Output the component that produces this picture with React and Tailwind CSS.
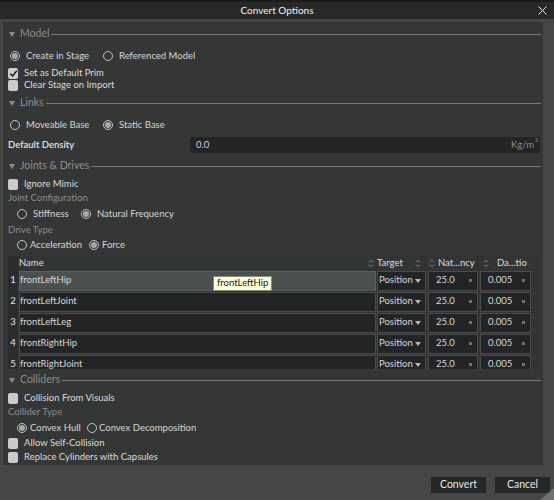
import React from "react";

const font = { fontFamily: "Lato, 'Liberation Sans', sans-serif" };

function Radio({ on, label, className, gap }) {
  return (
    <div className={`flex items-center shrink-0 ${className}`}>
      <span className="w-[10px] h-[10px] rounded-full border border-[#c4c4c4] flex items-center justify-center shrink-0">
        {on && <span className="w-[6px] h-[6px] rounded-full bg-[#a9a9a9]" />}
      </span>
      <span className={`text-[9.5px] text-[#d6d6d6] whitespace-nowrap ${gap}`}>{label}</span>
    </div>
  );
}

function Check({ on, label, h }) {
  return (
    <div className={`flex items-center pl-[5px] ${h}`}>
      <span className="w-[10px] h-[11px] rounded-[2px] bg-[#cbcbcb] flex items-center justify-center shrink-0">
        {on && (
          <svg width="9" height="9" viewBox="0 0 10 10">
            <path d="M1.5 5.2 L4 7.8 L8.8 1.8" fill="none" stroke="#111" strokeWidth="1.6" />
          </svg>
        )}
      </span>
      <span className="ml-[6px] text-[9.5px] text-[#dcdcdc] whitespace-nowrap">{label}</span>
    </div>
  );
}

function Header({ label, h }) {
  return (
    <div className={`flex items-center pl-[6px] pr-[2px] ${h}`}>
      <svg width="6" height="5" viewBox="0 0 6 5" className="shrink-0">
        <path d="M0 0 H6 L3 5 Z" fill="#8a8a8a" />
      </svg>
      <span className="ml-[5px] text-[10.5px] text-[#8c8c8c] whitespace-nowrap">{label}</span>
      <div className="ml-[2px] flex-1 h-[1px] bg-[#7a7a7a]" />
    </div>
  );
}

function Label({ text, h }) {
  return (
    <div className={`flex items-center pl-[5px] text-[9.5px] text-[#8b8b8b] ${h}`}>{text}</div>
  );
}

function SortIcon() {
  return (
    <svg width="6" height="9" viewBox="0 0 6 9" className="shrink-0">
      <path d="M0.8 3.4 L3 1.2 L5.2 3.4 M0.8 5.6 L3 7.8 L5.2 5.6" fill="none" stroke="#8d8d8d" strokeWidth="0.9" />
    </svg>
  );
}

const rows = ["frontLeftHip", "frontLeftJoint", "frontLeftLeg", "frontRightHip", "frontRightJoint"];

function Table() {
  return (
    <div className="ml-[5px] w-[532px] h-[113px] overflow-hidden bg-[#333434] relative">
      <div className="flex h-[14px] items-center text-[9.5px] text-[#dedede]">
        <div className="w-[10px] h-full bg-[#2b2c2c]" />
        <div className="ml-[1px] w-[357px] flex items-center justify-between pr-[2px]">
          <span>Name</span>
          <SortIcon />
        </div>
        <div className="ml-[1px] w-[49px] flex items-center justify-between pr-[4px] h-full border-r border-[#2a2b2b]">
          <span>Target</span>
          <SortIcon />
        </div>
        <div className="ml-[2px] w-[50px] flex items-center gap-[3px] pl-[1px] h-full border-r border-[#2a2b2b]">
          <SortIcon />
          <span className="whitespace-nowrap">Nat...ncy</span>
        </div>
        <div className="ml-[2px] w-[51px] flex items-center pl-[3px] h-full">
          <SortIcon />
          <span className="ml-[8px] whitespace-nowrap">Da...tio</span>
        </div>
      </div>
      {rows.map((r, i) => (
        <div key={r} className="flex h-[21px] items-center text-[9.5px] text-[#d8d8d8]">
          <div className="w-[10px] h-full bg-[#2b2c2c] flex items-start pt-[3px] justify-center text-[#e6e6e6]">
            {i + 1}
          </div>
          <div
            className={`ml-[1px] w-[357px] h-[20px] border flex items-center ${
              i === 0 ? "bg-[#4a5050] border-[#5a6060]" : "bg-[#232425] border-[#4a4b4b]"
            }`}
          >
            {r}
          </div>
          <div className="ml-[1px] w-[49px] h-[20px] border border-[#4a4b4b] bg-[#232425] flex items-center justify-between pl-[1px] pr-[4px]">
            <span>Position</span>
            <svg width="6" height="4" viewBox="0 0 6 4">
              <path d="M0 0 H6 L3 4 Z" fill="#b8b8b8" />
            </svg>
          </div>
          <div className="ml-[2px] w-[50px] h-[20px] border border-[#4a4b4b] bg-[#232425] flex items-center justify-between pl-[7px] pr-[5px]">
            <span>25.0</span>
            <span className="w-[3px] h-[3px] bg-[#6f6f6f]" />
          </div>
          <div className="ml-[2px] w-[51px] h-[20px] border border-[#4a4b4b] bg-[#232425] flex items-center justify-between pl-[7px] pr-[5px]">
            <span>0.005</span>
            <span className="w-[3px] h-[3px] bg-[#6f6f6f]" />
          </div>
        </div>
      ))}
      <div className="absolute left-[205px] top-[20px] h-[15px] px-[3px] bg-[#fdfdd6] border border-[#8a8a7a] flex items-center text-[9.5px] text-[#1a1a1a]">
        frontLeftHip
      </div>
    </div>
  );
}

export default function App() {
  return (
    <div className="w-[554px] h-[500px] bg-[#464646] flex flex-col overflow-hidden relative" style={font}>
      <div className="h-[2px] bg-[#1b1b1b]" />
      <div className="h-[17px] bg-[#282828] flex items-center justify-center relative text-[10px] text-[#f0f0f0]">
        Convert Options
        <svg width="9" height="9" viewBox="0 0 9 9" className="absolute right-[7px] top-[4px]">
          <path d="M0.5 0.5 L8.5 8.5 M8.5 0.5 L0.5 8.5" stroke="#e8e8e8" strokeWidth="1" />
        </svg>
      </div>
      <div className="h-[3px]" />
      <div className="ml-[3px] w-[540px] h-[443px] bg-[#353636] flex flex-col pt-[1px]">
        <Header label="Model" h="h-[22px]" />
        <div className="flex items-center h-[22px] pl-[7px]">
          <Radio on label="Create in Stage" className="w-[93px]" gap="ml-[6px]" />
          <Radio label="Referenced Model" gap="ml-[6px]" />
        </div>
        <Check on label="Set as Default Prim" h="h-[12px]" />
        <Check label="Clear Stage on Import" h="h-[12px]" />
        <Header label="Links" h="h-[24px]" />
        <div className="flex items-center h-[20px] pl-[7px]">
          <Radio label="Moveable Base" className="w-[93px]" gap="ml-[6px]" />
          <Radio on label="Static Base" gap="ml-[6px]" />
        </div>
        <div className="flex items-center h-[20px] pl-[5px]">
          <span className="w-[182px] text-[9.5px] text-[#e4e4e4] font-semibold">Default Density</span>
          <div className="w-[350px] h-[16px] rounded-[2px] bg-[#232425] flex items-center justify-between pl-[6px] pr-[2px] text-[9.5px]">
            <span className="text-[#d0d0d0]">0.0</span>
            <span className="text-[#8e8e8e] flex items-start">
              Kg/m<span className="text-[5px] leading-[5px] ml-[1px]">3</span>
            </span>
          </div>
        </div>
        <Header label="Joints & Drives" h="h-[22px]" />
        <Check label="Ignore Mimic" h="h-[14px]" />
        <Label text="Joint Configuration" h="h-[14px]" />
        <div className="flex items-center h-[18px] pl-[14px]">
          <Radio label="Stiffness" className="w-[64px]" gap="ml-[6px]" />
          <Radio on label="Natural Frequency" gap="ml-[6px]" />
        </div>
        <Label text="Drive Type" h="h-[14px]" />
        <div className="flex items-center h-[16px] pl-[14px]">
          <Radio label="Acceleration" className="w-[72px]" gap="ml-[3px]" />
          <Radio on label="Force" gap="ml-[3px]" />
        </div>
        <div className="h-[3px]" />
        <Table />
        <Header label="Colliders" h="h-[22px]" />
        <Check label="Collision From Visuals" h="h-[14px]" />
        <Label text="Collider Type" h="h-[14px]" />
        <div className="flex items-center h-[18px] pl-[14px]">
          <Radio on label="Convex Hull" className="w-[70px]" gap="ml-[3px]" />
          <Radio label="Convex Decomposition" gap="ml-[2px]" />
        </div>
        <Check label="Allow Self-Collision" h="h-[13px]" />
        <Check label="Replace Cylinders with Capsules" h="h-[14px]" />
      </div>
      <div className="flex-1 flex items-start justify-end pt-[12px] pr-[4px] gap-[9px]">
        <button className="w-[55px] h-[16px] bg-[#262727] text-[10.5px] text-[#e6e6e6] flex items-center justify-center">
          Convert
        </button>
        <button className="w-[55px] h-[16px] bg-[#262727] text-[10.5px] text-[#e6e6e6] flex items-center justify-center">
          Cancel
        </button>
      </div>
      <svg width="14" height="12" viewBox="0 0 14 12" className="absolute right-0 bottom-0">
        <path d="M14 0 L14 12 L0 12 Z" fill="#6a7272" />
      </svg>
    </div>
  );
}
